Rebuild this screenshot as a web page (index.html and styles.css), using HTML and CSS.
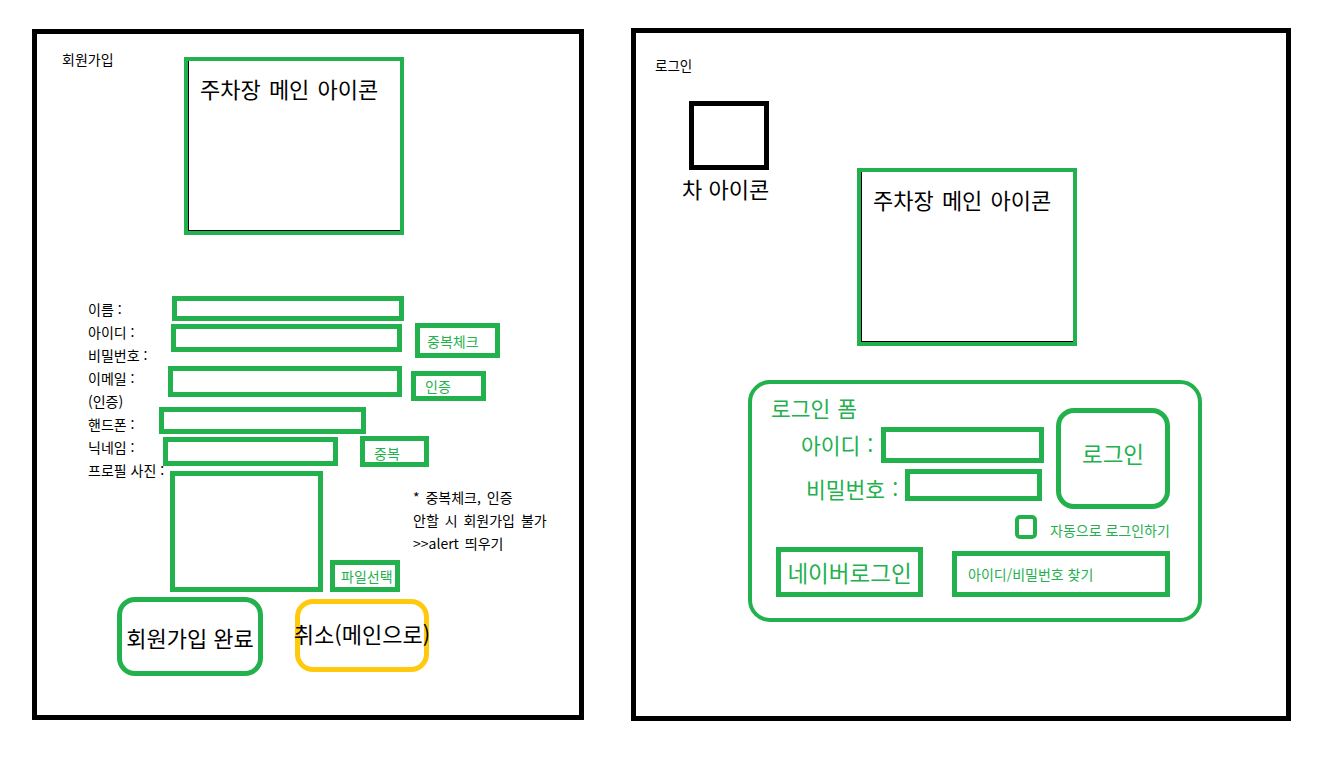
FILE: index.html
```html
<!DOCTYPE html>
<html lang="ko">
<head>
    <meta charset="UTF-8">
    <meta name="viewport" content="width=device-width, initial-scale=1.0">
    <title>주차장 화면 설계</title>
    <link rel="stylesheet" href="styles.css">
</head>
<body>

    <!-- 회원가입 화면 -->
    <div class="sheet sheet-join">
        <div class="sheet-title">회원가입</div>
        <div class="main-icon">주차장 메인 아이콘</div>

        <div class="labels">
            <div>이름 :</div>
            <div>아이디 :</div>
            <div>비밀번호 :</div>
            <div>이메일 :</div>
            <div>(인증)</div>
            <div>핸드폰 :</div>
            <div>닉네임 :</div>
            <div>프로필 사진 :</div>
        </div>

        <div class="box in-name"></div>
        <div class="box in-id"></div>
        <div class="box btn-small btn-dup">중복체크</div>
        <div class="box in-email"></div>
        <div class="box btn-small btn-auth">인증</div>
        <div class="box in-phone"></div>
        <div class="box in-nick"></div>
        <div class="box btn-small btn-dup2">중복</div>
        <div class="box photo"></div>
        <div class="box btn-small btn-file">파일선택</div>

        <div class="note">
            <div>* 중복체크, 인증</div>
            <div>안할 시 회원가입 불가</div>
            <div>&gt;&gt;alert 띄우기</div>
        </div>

        <div class="big-btn btn-done">회원가입 완료</div>
        <div class="big-btn btn-cancel">취소(메인으로)</div>
    </div>

    <!-- 로그인 화면 -->
    <div class="sheet sheet-login">
        <div class="sheet-title">로그인</div>
        <div class="car-icon"></div>
        <div class="car-label">차 아이콘</div>
        <div class="main-icon">주차장 메인 아이콘</div>

        <div class="login-form">
            <div class="form-title">로그인 폼</div>
            <div class="form-label lbl-id">아이디 :</div>
            <div class="box in-login-id"></div>
            <div class="form-label lbl-pw">비밀번호 :</div>
            <div class="box in-login-pw"></div>
            <div class="login-btn">로그인</div>
            <div class="auto-check"></div>
            <div class="auto-label">자동으로 로그인하기</div>
            <div class="box btn-naver">네이버로그인</div>
            <div class="box btn-find">아이디/비밀번호 찾기</div>
        </div>
    </div>

</body>
</html>
```

FILE: styles.css
```css
/* Global */
body {
    margin: 0;
    padding: 28px 0 0 32px;
    display: flex;
    align-items: flex-start;
    gap: 47px;
    background: #fff;
    color: #000;
    font-family: "Noto Sans CJK KR", "Noto Sans", sans-serif;
    font-size: 14px;
}

/* Sheet = hand drawn canvas */
.sheet {
    position: relative;
    border: 5px solid #000;
}

.sheet-join {
    width: 542px;
    height: 681px;
    margin-top: 1px;
}

.sheet-login {
    width: 650px;
    height: 683px;
}

.sheet-title {
    position: absolute;
    line-height: 18px;
}

.sheet-join .sheet-title { left: 25px; top: 16px; }
.sheet-login .sheet-title { left: 19px; top: 23px; font-size: 13.5px; }

/* Green outline boxes */
.box {
    position: absolute;
    box-sizing: border-box;
    border: 5px solid #22b14c;
    color: #22b14c;
}

.main-icon {
    position: absolute;
    box-sizing: border-box;
    width: 220px;
    height: 178px;
    border: 4px solid #22b14c;
    box-shadow: inset 1px -1px 0 #000;
    padding: 14px 0 0 12px;
    font-size: 22px;
    line-height: 26px;
    word-spacing: 2px;
}

.sheet-join .main-icon { left: 147px; top: 23px; }
.sheet-login .main-icon { left: 221px; top: 135px; }

/* Sign up form */
.labels {
    position: absolute;
    left: 51px;
    top: 264px;
    line-height: 23px;
}

.btn-small {
    display: flex;
    align-items: center;
    padding-left: 7px;
}

.in-name  { left: 135px; top: 262px; width: 232px; height: 25px; }
.in-id    { left: 134px; top: 290px; width: 231px; height: 28px; }
.btn-dup  { left: 378px; top: 289px; width: 85px;  height: 35px; }
.in-email { left: 131px; top: 332px; width: 234px; height: 31px; }
.btn-auth { left: 374px; top: 337px; width: 75px;  height: 30px; padding-left: 9px; }
.in-phone { left: 122px; top: 373px; width: 207px; height: 27px; }
.in-nick  { left: 126px; top: 403px; width: 175px; height: 29px; }
.btn-dup2 { left: 323px; top: 402px; width: 69px;  height: 31px; padding-left: 9px; padding-top: 2px; }
.photo    { left: 133px; top: 437px; width: 153px; height: 121px; }
.btn-file { left: 293px; top: 526px; width: 70px;  height: 32px; padding-left: 6px; }

.note {
    position: absolute;
    left: 376px;
    top: 452px;
    line-height: 23px;
    word-spacing: 2px;
}

.big-btn {
    position: absolute;
    box-sizing: border-box;
    display: flex;
    align-items: center;
    justify-content: center;
    white-space: nowrap;
    border-radius: 18px;
    font-size: 22px;
}

.btn-done {
    left: 80px;
    top: 563px;
    width: 146px;
    height: 79px;
    border: 5px solid #22b14c;
}

.btn-cancel {
    left: 258px;
    top: 565px;
    width: 134px;
    height: 73px;
    border: 5px solid #ffc90e;
    padding-bottom: 6px;
}

/* Login screen */
.car-icon {
    position: absolute;
    left: 53px;
    top: 68px;
    width: 70px;
    height: 59px;
    border: 5px solid #000;
}

.car-label {
    position: absolute;
    left: 46px;
    top: 142px;
    font-size: 22px;
    line-height: 26px;
}

.login-form {
    position: absolute;
    left: 112px;
    top: 347px;
    box-sizing: border-box;
    width: 454px;
    height: 242px;
    border: 4px solid #22b14c;
    border-radius: 22px;
    color: #22b14c;
}

.form-title,
.form-label {
    position: absolute;
    font-size: 21.5px;
    line-height: 26px;
    word-spacing: 1px;
}

.form-title { left: 19px; top: 11px; }
.lbl-id     { left: 49px; top: 48px; }
.lbl-pw     { left: 54px; top: 92px; }

.in-login-id { left: 129px; top: 43px; width: 163px; height: 36px; }
.in-login-pw { left: 153px; top: 85px; width: 137px; height: 32px; }

.login-btn {
    position: absolute;
    left: 304px;
    top: 24px;
    box-sizing: border-box;
    width: 114px;
    height: 101px;
    border: 5px solid #22b14c;
    border-radius: 18px;
    display: flex;
    align-items: center;
    justify-content: center;
    padding-bottom: 12px;
    font-size: 22.5px;
}

.auto-check {
    position: absolute;
    left: 263px;
    top: 131px;
    box-sizing: border-box;
    width: 22px;
    height: 24px;
    border: 4px solid #22b14c;
    border-radius: 5px;
}

.auto-label {
    position: absolute;
    left: 298px;
    top: 137px;
    line-height: 18px;
}

.btn-naver {
    left: 24px;
    top: 163px;
    width: 147px;
    height: 50px;
    display: flex;
    align-items: center;
    justify-content: center;
    font-size: 22.5px;
}

.btn-find {
    left: 200px;
    top: 167px;
    width: 218px;
    height: 46px;
    display: flex;
    align-items: center;
    padding-left: 11px;
}
```
